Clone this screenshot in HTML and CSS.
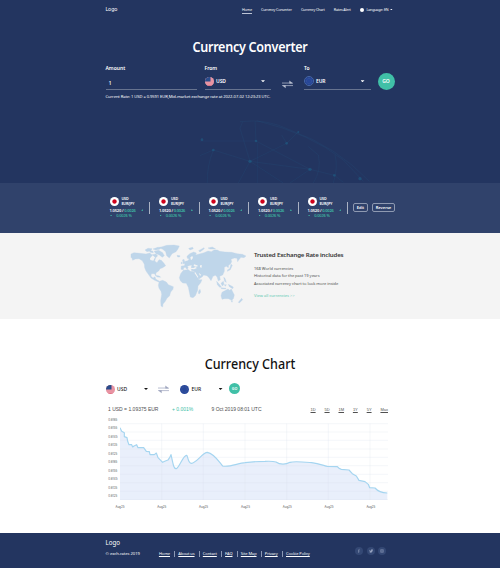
FILE: index.html
```html
<!DOCTYPE html>
<html lang="en">
<head>
<meta charset="utf-8">
<title>Currency Converter</title>
<link rel="stylesheet" href="styles.css">
</head>
<body>
<svg width="0" height="0" class="defs">
  <symbol id="us" viewBox="0 0 18 18"><clipPath id="c"><circle cx="9" cy="9" r="9"/></clipPath><g clip-path="url(#c)"><path fill="#f0d5dc" d="M0 0h18v18H0z"/><path fill="#df5269" d="M0 1h18v2H0zM0 5h18v2H0zM0 9h18v2H0zM0 13h18v2H0zM0 16.500h18V18H0z"/><path fill="#294c8b" d="M0 0h11v9H0z"/></g></symbol>
  <symbol id="eu" viewBox="0 0 18 18"><circle cx="9" cy="9" r="9" fill="#27479a"/><circle cx="9" cy="9" r="5.500" fill="none" stroke="#7580a0" stroke-width="1" stroke-dasharray="1 1.900"/></symbol>
  <symbol id="swap" viewBox="0 0 30 24"><path d="M0 8h29M30 15H1" fill="none" stroke="currentColor" stroke-width="2"/><path d="M20 1l10 8H20zM10 22L0 14h10z" fill="currentColor"/></symbol>
</svg>
<header class="hero">
  <svg class="globe" viewBox="0 0 900 249" fill="none" stroke="#23517c" stroke-width="2">
    <path opacity=".35" d="M120 65Q200 55 270 90Q410 140 508 244M170 62Q330 100 430 180L490 244M165 64L168 123L330 208L403 226L430 247M168 123H0M40 150L0 167M40 150L150 184L330 208L270 249M150 184L260 130L245 105M150 184L115 249M150 184L120 85L128 65M40 150Q20 200 22 249M325 140L355 165Q365 210 340 249M405 165Q415 200 400 249M172 130V249M260 130L295 95M150 184L250 249"/>
    <g fill="#1d7197" stroke="none" opacity=".4"><circle cx="168" cy="123" r="4"/><circle cx="150" cy="184" r="5"/><circle cx="40" cy="150" r="4"/><circle cx="6" cy="119" r="4"/><circle cx="330" cy="208" r="5"/><circle cx="403" cy="226" r="4"/><circle cx="295" cy="96" r="3"/><circle cx="260" cy="130" r="4"/><circle cx="480" cy="236" r="5"/></g>
  </svg>
  <nav class="wrap nav">
    <a class="brand">Logo</a>
    <a class="active">Home</a><a>Currency Converter</a><a>Currency Chart</a><a>Rates Alert</a>
    <a class="lang"><i class="dot"></i>Language: EN<i class="caret"></i></a>
  </nav>
  <h1>Currency Converter</h1>
  <div class="wrap form">
    <div class="field"><label>Amount</label><div class="input amount">1</div></div>
    <div class="field"><label>From</label><div class="input"><svg class="flag"><use href="#us"/></svg>USD<i class="caret"></i></div></div>
    <svg class="swap"><use href="#swap"/></svg>
    <div class="field"><label>To</label><div class="input"><svg class="flag ring"><use href="#eu"/></svg>EUR<i class="caret"></i></div></div>
    <div class="go">GO</div>
  </div>
  <p class="wrap current">Current Rate: 1 USD = 0.9591 EUR,Mid-market exchange rate at 2022-07-02 12:23:23 UTC.</p>
</header>
<section class="rates">
  <div class="wrap ticker">
    <div class="rate"><div class="pair"><i class="jp"></i><span>USD<br>EUR/JPY</span></div><p>1.0520 / <em>0.0026</em><i class="up"></i></p><p class="pct"><i class="up"></i>0.0026 %</p></div>
    <div class="rate"><div class="pair"><i class="jp"></i><span>USD<br>EUR/JPY</span></div><p>1.0520 / <em>0.0026</em><i class="up"></i></p><p class="pct"><i class="up"></i>0.0026 %</p></div>
    <div class="rate"><div class="pair"><i class="jp"></i><span>USD<br>EUR/JPY</span></div><p>1.0520 / <em>0.0026</em><i class="up"></i></p><p class="pct"><i class="up"></i>0.0026 %</p></div>
    <div class="rate"><div class="pair"><i class="jp"></i><span>USD<br>EUR/JPY</span></div><p>1.0520 / <em>0.0026</em><i class="up"></i></p><p class="pct"><i class="up"></i>0.0026 %</p></div>
    <div class="rate"><div class="pair"><i class="jp"></i><span>USD<br>EUR/JPY</span></div><p>1.0520 / <em>0.0026</em><i class="up"></i></p><p class="pct"><i class="up"></i>0.0026 %</p></div>
    <span class="btn edit">Edit</span><span class="btn">Reverse</span>
  </div>
</section>
<section class="info">
  <svg class="map" viewBox="0 6 405 255" fill="#bfd6ea" stroke="#bfd6ea" stroke-width="1">
    <path d="M33 57L42 53L60 55L78 57L89 54L96 59L108 57L113 63L107 68L104 78L111 83L117 74L124 76L132 85L137 92L128 98L120 101L116 108L108 113L107 121L103 116L94 116L93 124L99 129L105 125L107 132L113 136L119 139L116 141L104 136L93 129L85 118L78 108L74 98L73 88L67 77L57 71L46 72L38 76L36 70L33 67Z"/>
    <path d="M75 45L84 40L96 41L93 47L81 50ZM99 42L113 37L126 37L118 43L107 45ZM102 49L116 46L128 53L133 62L127 67L118 60L108 56ZM89 48L98 48L100 53L91 52Z"/>
    <path d="M118 38L140 31L162 30L178 33L174 42L168 50L156 56L148 69L140 62L137 50L128 43ZM171 61L180 62L179 66L173 66ZM105 121L118 123L122 127L112 126Z"/>
    <path d="M118 139L128 136L139 141L145 149L160 155L159 163L152 171L149 182L141 190L135 200L129 207L128 216L123 213L122 197L125 178L123 169L117 160L115 151Z"/>
    <path d="M183 103L184 93L193 92L195 86L190 83L196 79L203 77L208 72L202 70L201 64L209 56L221 51L229 54L227 60L238 57L252 53L264 48L274 50L282 45L292 45L299 49L315 51L335 52L352 56L367 58L378 63L372 68L363 67L356 75L353 80L351 70L343 69L333 73L335 80L331 88L326 90L325 98L319 94L313 97L313 109L308 120L299 124L301 134L295 138L291 125L286 121L279 124L273 137L267 128L261 122L251 120L247 125L237 132L231 124L227 114L222 108L215 107L213 99L204 96L202 104L196 97L191 98L190 104Z"/>
    <path d="M190 106L205 104L211 109L225 110L230 120L237 134L246 134L242 143L234 153L233 166L226 182L219 188L211 186L208 172L205 157L199 145L188 144L181 137L178 128L182 116ZM240 163L242 171L238 177L235 175L236 168ZM187 75L192 73L195 84L188 87L190 81ZM184 82L187 80L186 86L183 86Z"/>
    <path d="M306 172L317 166L324 162L329 166L334 162L338 170L343 180L340 191L335 196L325 191L314 191L306 193L303 182ZM333 197L338 197L336 202ZM365 190L368 194L358 204L355 202ZM290 139L298 148L304 156L299 157L292 149ZM303 145L310 139L312 148L307 153ZM313 149L319 149L316 154ZM325 148L340 156L338 161L328 155ZM303 158L318 160L317 162L304 161ZM311 127L315 130L319 142L314 139ZM333 88L337 91L331 104L322 109L323 104L329 101ZM206 40L218 37L220 41L210 45ZM236 47L252 38L253 41L240 51ZM264 39L277 36L287 42L270 42Z"/>
    <path fill="#f4f4f4" stroke="none" d="M207 92L215 91L213 98L220 99L226 96L231 99L222 103L211 101L202 95ZM222 88L229 90L235 93L228 95L221 93ZM240 91L246 91L244 99L240 96ZM211 67L217 63L219 69L213 76ZM90 70L98 61L105 67L100 77L91 75ZM226 112L235 126L233 128L223 113ZM236 113L244 120L240 122Z"/>
  </svg>
  <div class="copy"><h2>Trusted Exchange Rate includes</h2><p>168 World currencies</p><p>Historical data for the past 19 years</p><p>Associated currency chart to look more inside</p><a>View all currencies &gt;&gt;</a></div>
</section>
<main>
  <h1>Currency Chart</h1>
  <div class="wrap picker">
    <div class="choice"><svg class="flag"><use href="#us"/></svg>USD<i class="caret"></i></div>
    <svg class="swap"><use href="#swap"/></svg>
    <div class="choice"><svg class="flag"><use href="#eu"/></svg>EUR<i class="caret"></i></div>
    <div class="go small">GO</div>
  </div>
  <div class="wrap stats"><span>1 USD = 1.09375 EUR</span><span class="gain">+ 0.001%</span><span>9 Oct 2019 08:01 UTC</span><div class="range"><u>1D</u><u>5D</u><u>1M</u><u>1Y</u><u>5Y</u><u>Max</u></div></div>
  <div class="wrap plot">
    <div class="yaxis"><span>0.8165</span><span>0.8155</span><span>0.8145</span><span>0.8135</span><span>0.8125</span><span>0.8165</span><span>0.8155</span><span>0.8145</span><span>0.8135</span><span>0.8125</span></div>
    <svg class="chart" viewBox="75 39 804 231">
      <path fill="#e9effb" d="M75 53L80 64L88 68V80L96 83L98 94L102 104L110 104L113 111L117 108L125 104L129 113L146 113L154 124L163 125L165 134L178 134L184 129L189 143L203 157Q211 152 219 150Q225 143 228 134C233 154 235 178 244 176C254 172 265 134 275 136C279 139 279 160 289 160C305 159 323 127 337 127C357 130 372 155 383 168C402 173 431 159 450 158Q480 154 510 154Q534 153 543 156C555 165 573 164 585 157C598 153 627 156 650 158C671 160 690 168 697 169L727 170Q731 176 739 178L762 180L772 191L784 198L792 211L810 215L820 223L824 233L840 234Q852 248 877 249V270H75Z"/>
      <path stroke="#dce3ee" stroke-opacity=".55" stroke-width="1.500" fill="none" d="M75 41H879M75 66H879M75 91H879M75 117H879M75 142H879M75 167H879M75 193H879M75 218H879M75 244H879M75 269H879M200 41V270M325 41V270M450 41V270M575 41V270M700 41V270M825 41V270"/>
      <path fill="none" stroke="#a5d5f0" stroke-width="3.500" stroke-linejoin="round" d="M75 53L80 64L88 68V80L96 83L98 94L102 104L110 104L113 111L117 108L125 104L129 113L146 113L154 124L163 125L165 134L178 134L184 129L189 143L203 157Q211 152 219 150Q225 143 228 134C233 154 235 178 244 176C254 172 265 134 275 136C279 139 279 160 289 160C305 159 323 127 337 127C357 130 372 155 383 168C402 173 431 159 450 158Q480 154 510 154Q534 153 543 156C555 165 573 164 585 157C598 153 627 156 650 158C671 160 690 168 697 169L727 170Q731 176 739 178L762 180L772 191L784 198L792 211L810 215L820 223L824 233L840 234Q852 248 877 249"/>
    </svg>
  </div>
  <div class="xaxis"><span>Aug25</span><span>Aug25</span><span>Aug25</span><span>Aug25</span><span>Aug25</span><span>Aug25</span><span>Aug25</span></div>
</main>
<footer>
  <div class="wrap foot">
    <div class="mark"><b>Logo</b><span>© exch-rates 2019</span></div>
    <div class="links"><a>Home</a><a>About us</a><a>Contact</a><a>FAQ</a><a>Site Map</a><a>Privacy</a><a>Cookie Policy</a></div>
    <div class="social">
      <svg viewBox="0 0 24 24"><circle cx="12" cy="12" r="12"/><path d="M14 7h-1q-2 0-2 2v9M9 12h5"/></svg>
      <svg viewBox="0 0 24 24"><circle cx="12" cy="12" r="12"/><path class="fill" d="M7 8q2 3 5 3q0-4 3-4l3 1l-1 3q-1 6-6 6l-4-1l2-1q-2-2-2-7z"/></svg>
      <svg viewBox="0 0 24 24"><circle cx="12" cy="12" r="12"/><path d="M8 8h8v8H8zM10.500 12a1.500 1.500 0 1 0 3 0a1.500 1.500 0 1 0-3 0"/></svg>
    </div>
  </div>
</footer>
</body>
</html>
```
FILE: styles.css
```css
* { box-sizing: border-box; }
body { margin: 0; width: 500px; height: 568px; overflow: hidden; background: #fff; color: #171717; font-family: "Noto Sans", "Open Sans", sans-serif; font-size: 4px; }
h1, h2, p { margin: 0; }
svg { display: block; }
i, em { font-style: normal; }
.defs { position: absolute; }
.wrap { width: 290px; margin-left: 105.500px; }
.hero { position: relative; height: 183px; background: #233560; color: #fff; overflow: hidden; }
.globe { position: absolute; left: 200px; top: 100px; width: 300px; height: 83px; }
.nav { display: flex; height: 19px; font-size: 3.700px; line-height: 19px; letter-spacing: -.17px; white-space: nowrap; }
.nav a { margin-right: 9.200px; }
.nav .brand { width: 136.500px; margin: 0; font-size: 5.200px; letter-spacing: -.1px; flex: none; }
.nav .active { height: 13.500px; border-bottom: 1px solid #bcc4d6; }
.nav .lang { display: flex; align-items: center; margin: 0; }
.dot { width: 4px; height: 4px; border-radius: 50%; background: #fff; margin-right: 2.500px; }
.caret { flex: none; width: 4px; height: 2.200px; background: currentColor; clip-path: polygon(0 0, 100% 0, 50% 100%); }
.nav .caret { margin-left: 1.500px; width: 2.800px; height: 1.600px; }
h1 { text-align: center; font-size: 13.600px; line-height: 18px; font-weight: 600; letter-spacing: -.3px; transform: scaleX(.925); }
.hero h1 { margin-top: 19px; }
.form { display: flex; margin-top: 9px; height: 26px; }
.field { width: 66.500px; }
.field:first-child { width: 91px; margin-right: 8px; }
.field label { display: block; font-size: 5px; line-height: 7px; font-weight: 600; }
.input { display: flex; align-items: center; height: 17.500px; padding-top: 2px; border-bottom: 1px solid #66738f; font-size: 5px; font-weight: 600; letter-spacing: -.1px; }
.amount { padding: 5px 0 0 3px; font-size: 5.500px; font-weight: 500; }
.flag { width: 9px; height: 9px; margin-right: 2.500px; flex: none; }
.ring { border: 1px solid #4868a8; border-radius: 50%; width: 10px; height: 10px; margin-right: 2px; }
.input .caret { margin-left: auto; margin-right: 6px; }
.swap { width: 11px; height: 9px; margin: 15px 11.500px 0 10.500px; color: #b8bfd0; }
.go { width: 17px; height: 17px; margin: 7.500px 0 0 7px; border-radius: 50%; background: #40c0a7; color: #fff; font-size: 5px; font-weight: 600; line-height: 17px; text-align: center; }
.current { margin-top: 2.500px; font-size: 4.100px; line-height: 6px; letter-spacing: -.07px; white-space: nowrap; }
.rates { height: 50px; background: #30426b; color: #fff; }
.ticker { display: flex; padding-left: 4px; }
.rate { position: relative; width: 49.500px; height: 37px; padding-top: 14px; font-size: 4px; font-weight: 600; white-space: nowrap; letter-spacing: -.17px; }
.rate::after { content: ""; position: absolute; right: 9px; top: 19px; width: 1px; height: 12px; background: #aab2c3; }
.pair { display: flex; gap: 3px; font-size: 3.700px; line-height: 4.500px; letter-spacing: -.2px; }
.jp { width: 9px; height: 9px; border-radius: 50%; background: radial-gradient(circle, #d0021b 1.700px, #fff 2.600px); }
.rate p { display: flex; align-items: center; height: 5.500px; margin-top: 1.300px; white-space: pre; }
.rate em, .rate .pct { color: #40c0a7; }
.rate .pct { margin-top: 0; font-weight: 500; }
.up { flex: none; width: 2.200px; height: 1.500px; background: #40c0a7; clip-path: polygon(50% 0, 100% 100%, 0 100%); margin-left: 5.500px; }
.pct .up { margin: 0 4px 0 .5px; }
.btn { width: 23px; height: 9px; margin: 20.200px 0 0 4px; border: 1px solid #8e99b1; border-radius: 2px; font-size: 4px; font-weight: 600; line-height: 7px; text-align: center; }
.edit { width: 15px; margin-left: -4px; }
.info { display: flex; height: 86px; padding-left: 120px; background: #f4f4f4; }
.map { width: 135px; height: 85px; margin-top: 3.500px; }
.copy { margin-left: -1px; padding-top: 18px; color: #505050; font-size: 4.050px; line-height: 7.500px; white-space: nowrap; letter-spacing: -.05px; }
.copy h2 { margin-bottom: 5.500px; font-size: 6.100px; line-height: 8px; font-weight: 600; color: #333; letter-spacing: -.15px; }
.copy a { display: block; margin-top: 5px; color: #5bc9b1; letter-spacing: 0; }
main { height: 214px; padding-top: 36px; color: #171717; }
main h1 { color: #111; line-height: 17px; font-weight: 500; letter-spacing: 0; }
.picker { display: flex; align-items: center; height: 18px; margin-top: 8px; }
.choice { display: flex; align-items: center; width: 42.500px; font-size: 5px; font-weight: 500; }
.choice .caret { margin-left: auto; }
.picker .swap { margin: 1px 11.500px 0 9.500px; color: #9ea5be; }
.small { width: 11px; height: 11px; margin: -1.500px 0 0 6.500px; font-size: 3.700px; line-height: 11px; }
.stats { display: flex; height: 9px; padding-left: 2.500px; margin-top: 7px; font: 5px/9px "Liberation Sans", sans-serif; color: #505050; white-space: nowrap; letter-spacing: 0; margin-bottom: 5px; }
.stats span:first-child { width: 64px; }
.stats .gain { width: 39.500px; color: #40c0a7; }
.range { display: flex; justify-content: space-between; width: 77.500px; margin-left: auto; margin-right: 7.500px; font-size: 4px; letter-spacing: 0; }
.plot { display: flex; }
.yaxis { display: flex; flex-direction: column; justify-content: space-between; width: 14.500px; height: 80px; padding-left: 2.800px; margin-top: -1px; font: 2.900px/4px Inter, sans-serif; color: #555; }
.chart { width: 268px; height: 77px; margin-top: 4px; }
.xaxis { display: flex; margin-left: 99px; font: 2.900px/4px Inter, sans-serif; color: #555; margin-top: 4.500px; }
.xaxis span { width: 41.830px; text-align: center; }
footer { height: 35px; background: #233560; color: #fff; white-space: nowrap; }
.foot { display: flex; }
.mark { width: 53.400px; padding-top: 6px; font-size: 4.100px; line-height: 5px; letter-spacing: -.02px; }
.mark b { display: block; font-size: 6.200px; line-height: 8px; font-weight: 400; margin-bottom: 4px; letter-spacing: 0; }
.mark span { display: block; }
.links { display: flex; margin-top: 17.500px; height: 6px; font-size: 4px; line-height: 6px; letter-spacing: -.07px; }
.links a { text-decoration: underline; margin-right: 4px; }
.links a + a { display: flex; }
.links a + a::before { content: ""; height: 6px; border-left: .7px solid #8c98b4; margin-right: 3.300px; }
.social { display: flex; gap: 3.500px; margin: 14px 0 0 auto; padding-right: 9.500px; }
.social svg { width: 8px; height: 8px; }
.social circle { fill: #344874; }
.social path { fill: none; stroke: #95a1be; stroke-width: 1.500; }
.social .fill { fill: #95a1be; stroke: none; }
```
